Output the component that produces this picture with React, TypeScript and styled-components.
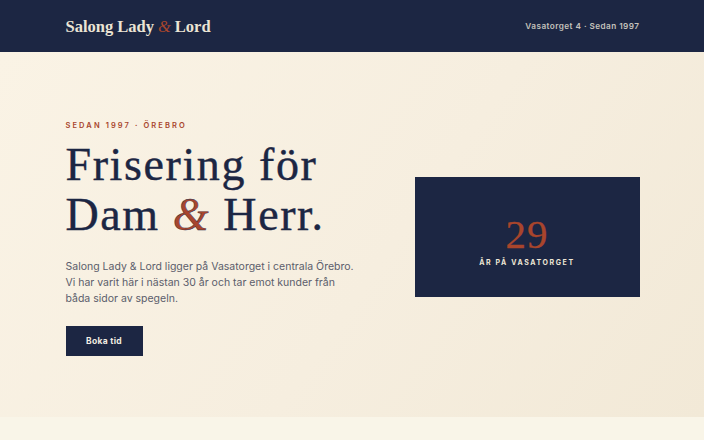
import React from 'react';
import styled, { createGlobalStyle } from 'styled-components';

const navy = '#1c2643';
const rust = '#a8452c';

const GlobalStyle = createGlobalStyle`
  html, body {
    margin: 0;
    padding: 0;
    background: #f9f5e8;
  }
  body {
    font-family: Inter, 'Liberation Sans', sans-serif;
    -webkit-font-smoothing: antialiased;
  }
  * { box-sizing: border-box; }
`;

const Header = styled.header`
  background: ${navy};
  height: 52px;
`;

const Wrap = styled.div<{ $top?: number }>`
  max-width: 575px;
  height: 100%;
  margin: 0 auto;
  padding-left: 1px;
  padding-top: ${(p) => p.$top ?? 0}px;
  display: flex;
  align-items: center;
  justify-content: space-between;
`;

const Logo = styled.div`
  font-family: 'Liberation Serif', serif;
  font-size: 16.5px;
  font-weight: 700;
  color: #ebe4d4;
  padding-top: 1px;
`;

const Amp = styled.span<{ $gap?: number }>`
  font-style: italic;
  font-weight: 400;
  color: ${rust};
  margin: 0 ${(p) => p.$gap ?? 2}px;
`;

const Address = styled.div`
  font-size: 8.2px;
  font-weight: 600;
  color: #c4c2bc;
  letter-spacing: 0.45px;
`;

const Hero = styled.section`
  height: 365px;
  background: linear-gradient(125deg, #faf3e5 0%, #f6eedf 55%, #f2e9d7 100%);
`;

const Intro = styled.div`
  width: 300px;
  padding-top: 4px;
`;

const Eyebrow = styled.div`
  font-size: 7.5px;
  font-weight: 600;
  letter-spacing: 2.1px;
  color: ${rust};
  margin-bottom: 10px;
`;

const Title = styled.h1`
  margin: 0 0 19px;
  font-family: 'Liberation Serif', serif;
  font-weight: 400;
  font-size: 46px;
  line-height: 50px;
  letter-spacing: 1.6px;
  color: ${navy};
  -webkit-text-stroke: 0.4px ${navy};
`;

const Lead = styled.p`
  margin: 0 0 19px;
  font-size: 10.5px;
  line-height: 16px;
  color: #5b5d6b;
`;

const Button = styled.button`
  width: 77px;
  height: 30px;
  border: 0;
  background: ${navy};
  color: #f2ede2;
  font-family: Inter, 'Liberation Sans', sans-serif;
  font-size: 8.5px;
  font-weight: 700;
  letter-spacing: 0.3px;
  cursor: pointer;
`;

const Card = styled.div`
  width: 225px;
  height: 120px;
  background: ${navy};
  display: flex;
  flex-direction: column;
  align-items: center;
  justify-content: center;
  padding-top: 4px;
`;

const Years = styled.div`
  font-family: 'Liberation Serif', serif;
  font-size: 41px;
  line-height: 48px;
  letter-spacing: 1px;
  color: ${rust};
  -webkit-text-stroke: 0.3px ${rust};
`;

const YearsLabel = styled.div`
  font-size: 7px;
  line-height: 10px;
  font-weight: 700;
  letter-spacing: 1.6px;
  color: #eee6d6;
`;

const Next = styled.section`
  height: 30px;
  background: #f9f5e8;
`;

const App = () => (
  <>
    <GlobalStyle />
    <Header>
      <Wrap>
        <Logo>
          Salong Lady<Amp $gap={4}>&amp;</Amp>Lord
        </Logo>
        <Address>Vasatorget 4 · Sedan 1997</Address>
      </Wrap>
    </Header>
    <Hero>
      <Wrap $top={4}>
        <Intro>
          <Eyebrow>SEDAN 1997 · ÖREBRO</Eyebrow>
          <Title>
            Frisering för
            <br />
            Dam <Amp $gap={0}>&amp;</Amp> Herr.
          </Title>
          <Lead>
            Salong Lady &amp; Lord ligger på Vasatorget i centrala Örebro.
            <br />
            Vi har varit här i nästan 30 år och tar emot kunder från
            <br />
            båda sidor av spegeln.
          </Lead>
          <Button>Boka tid</Button>
        </Intro>
        <Card>
          <Years>29</Years>
          <YearsLabel>ÅR PÅ VASATORGET</YearsLabel>
        </Card>
      </Wrap>
    </Hero>
    <Next />
  </>
);

export default App;
